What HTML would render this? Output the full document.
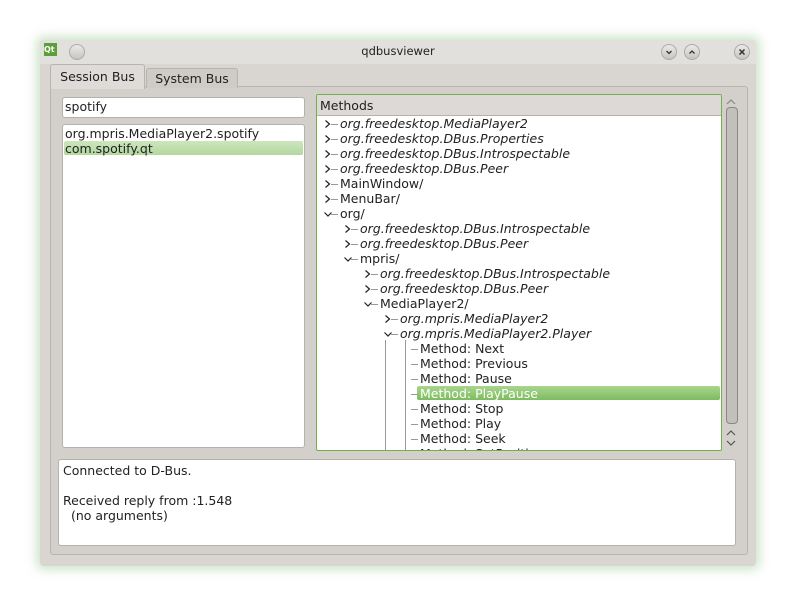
<!DOCTYPE html><html><head><style>
body{margin:0;width:795px;height:607px;background:#fff;font-family:"DejaVu Sans","Liberation Sans",sans-serif;font-size:12.5px;color:#222;position:relative;overflow:hidden}
.a{position:absolute}
.win{left:40px;top:40px;width:716px;height:526px;background:#d9d6d2;border-radius:4px;box-shadow:0 0 10px 4px rgba(120,180,110,.35)}
.tb{left:0;top:0;width:716px;height:24px;background:#e2e0dd;border-radius:4px 4px 0 0}
.btn{width:14px;height:14px;border-radius:50%;background:linear-gradient(#eceae8,#c7c4c1);border:1px solid #aaa}
.row{position:absolute;height:15px;line-height:15px;white-space:nowrap}
i{font-style:italic}
svg{position:absolute}
</style></head><body>
<div class="a win">
<div class="a tb"></div>
<div class="a" style="left:4px;top:3px;width:13px;height:13px;background:#5a9f3a;color:#fff;font-size:8px;font-weight:bold;line-height:13px">Qt</div>
<div class="a btn" style="left:29px;top:4px"></div>
<div class="a" style="left:0;width:716px;top:4px;text-align:center;font-size:11.5px">qdbusviewer</div>
<div class="a btn" style="left:621px;top:4px"><svg width="14" height="14"><path d="M4.5 6l2.5 2.5L9.5 6" fill="none" stroke="#333" stroke-width="1.3"/></svg></div>
<div class="a btn" style="left:644px;top:4px"><svg width="14" height="14"><path d="M4.5 8.5L7 6l2.5 2.5" fill="none" stroke="#333" stroke-width="1.3"/></svg></div>
<div class="a btn" style="left:694px;top:4px"><svg width="14" height="14"><path d="M4.5 4.5l5 5M9.5 4.5l-5 5" fill="none" stroke="#333" stroke-width="1.5"/></svg></div>
<div class="a" style="left:10px;top:46px;width:696px;height:467px;background:#d3cfcb;border:1px solid #b7b3ae;border-radius:3px"></div>
<div class="a" style="left:10px;top:24px;width:93px;height:24px;background:#dedbd8;border:1px solid #b7b3ae;border-bottom:none;border-radius:3px 3px 0 0;line-height:24px;text-align:center">Session Bus</div>
<div class="a" style="left:106px;top:28px;width:90px;height:19px;background:#cfcbc7;border:1px solid #b7b3ae;border-bottom:none;border-radius:3px 3px 0 0;line-height:19px;text-align:center">System Bus</div>
</div>
<div class="a" style="left:62px;top:97px;width:241px;height:19px;background:#fff;border:1px solid #b5b1ad;border-radius:3px"><div class="row" style="left:2px;top:1px">spotify</div></div>
<div class="a" style="left:62px;top:124px;width:241px;height:322px;background:#fff;border:1px solid #b5b1ad;border-radius:3px">
<div class="row" style="left:2px;top:1px">org.mpris.MediaPlayer2.spotify</div>
<div class="a" style="left:1px;top:16px;width:239px;height:14px;background:linear-gradient(#cde6bd,#b3d79f);border-radius:2px"></div>
<div class="row" style="left:2px;top:16px">com.spotify.qt</div></div>
<div class="a" style="left:316px;top:94px;width:404px;height:355px;background:#fff;border:1px solid #72b04c;border-radius:2px;overflow:hidden">
<div class="a" style="left:0;top:0;width:404px;height:20px;background:#dcd9d6;border-bottom:1px solid #b5b1ad"></div>
<div class="row" style="left:3px;top:3px">Methods</div>
<div class="a" style="left:100px;top:291px;width:303px;height:14px;background:linear-gradient(#a7d68e,#7dbb5e);border-radius:2px"></div>
<div class="a" style="left:68px;top:245px;width:0;height:110px;border-left:1px solid #999"></div>
<div class="a" style="left:88px;top:245px;width:0;height:110px;border-left:1px solid #999"></div>
<div id="t"></div>
</div>
<div class="a" style="left:724px;top:94px;width:15px;height:356px">
<svg width="15" height="12" style="top:2px"><path d="M3 8l4-4 4 4" fill="none" stroke="#888" stroke-width="1.2"/></svg>
<div class="a" style="left:2px;top:13px;width:10px;height:315px;border:1px solid #888;border-radius:4px;background:#c3bfbb"></div>
<svg width="15" height="12" style="top:333px"><path d="M3 8l4-4 4 4" fill="none" stroke="#555" stroke-width="1.2"/></svg>
<svg width="15" height="12" style="top:343px"><path d="M3 4l4 4 4-4" fill="none" stroke="#555" stroke-width="1.2"/></svg></div>
<div class="a" style="left:58px;top:459px;width:678px;height:87px;background:#fff;border:1px solid #b5b1ad;border-radius:3px;line-height:15px;padding:3px 4px;box-sizing:border-box">Connected to D-Bus.<br><br>Received reply from :1.548<br>&nbsp;&nbsp;(no arguments)</div>
<script>
var r=[[0,'>',1,'org.freedesktop.MediaPlayer2'],[0,'>',1,'org.freedesktop.DBus.Properties'],[0,'>',1,'org.freedesktop.DBus.Introspectable'],[0,'>',1,'org.freedesktop.DBus.Peer'],[0,'>',0,'MainWindow/'],[0,'>',0,'MenuBar/'],[0,'v',0,'org/'],[1,'>',1,'org.freedesktop.DBus.Introspectable'],[1,'>',1,'org.freedesktop.DBus.Peer'],[1,'v',0,'mpris/'],[2,'>',1,'org.freedesktop.DBus.Introspectable'],[2,'>',1,'org.freedesktop.DBus.Peer'],[2,'v',0,'MediaPlayer2/'],[3,'>',1,'org.mpris.MediaPlayer2'],[3,'v',1,'org.mpris.MediaPlayer2.Player'],[4,'',0,'Method: Next'],[4,'',0,'Method: Previous'],[4,'',0,'Method: Pause'],[4,'',2,'Method: PlayPause'],[4,'',0,'Method: Stop'],[4,'',0,'Method: Play'],[4,'',0,'Method: Seek'],[4,'',0,'Method: SetPosition']];
var h='';r.forEach(function(e,k){var y=21+k*15,x=23+e[0]*20;
if(e[1]=='>')h+='<svg width="8" height="10" style="left:'+(x-16)+'px;top:'+(y+3)+'px"><path d="M1.5 1.5l4 3.5-4 3.5" fill="none" stroke="#222" stroke-width="1.2"/></svg>';
if(e[1]=='v')h+='<svg width="10" height="8" style="left:'+(x-17)+'px;top:'+(y+5)+'px"><path d="M1.5 1.5l3.5 3.5 3.5-3.5" fill="none" stroke="#222" stroke-width="1.2"/></svg>';
h+='<div class="a" style="left:'+(x-9)+'px;top:'+(y+8)+'px;width:7px;border-top:1px solid #999"></div>';
h+='<div class="row" style="left:'+x+'px;top:'+y+'px;'+(e[2]==2?'color:#fff':'')+'">'+(e[2]==1?'<i>'+e[3]+'</i>':e[3])+'</div>'});
document.getElementById('t').innerHTML=h;
</script>
</body></html>
